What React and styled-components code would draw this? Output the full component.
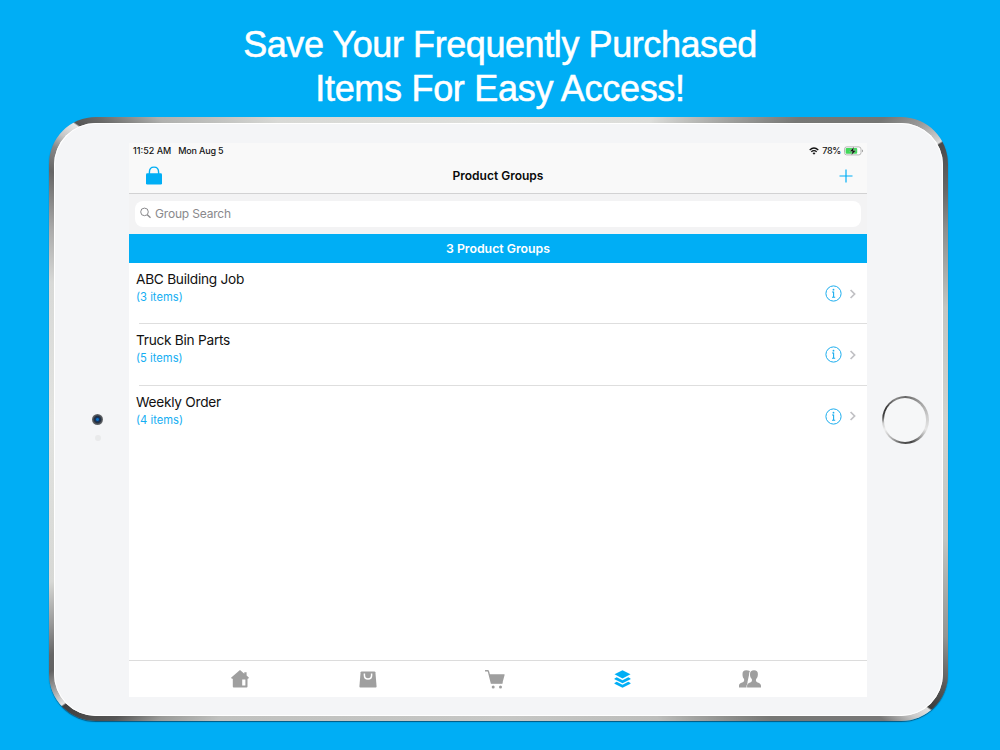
import React from 'react';
import styled, { createGlobalStyle } from 'styled-components';

const BLUE = '#00aef5';

const GlobalStyle = createGlobalStyle`
  * {
    box-sizing: border-box;
  }
  body {
    margin: 0;
    background: ${BLUE};
    font-family: Inter, "Liberation Sans", sans-serif;
  }
`;

const Page = styled.main`
  width: 1000px;
  height: 750px;
  overflow: hidden;
  background: ${BLUE};
`;

const Headline = styled.h1`
  height: 117px;
  margin: 0;
  padding-top: 23px;
  color: white;
  font: 400 36px/44px "Liberation Sans", sans-serif;
  text-align: center;
  -webkit-text-stroke: 0.55px white;
`;

const HeadlineLine = styled.span`
  display: block;
  letter-spacing: ${(props) => props.$spacing};
`;

// Metal edge of the tablet
const Tablet = styled.div`
  width: 899px;
  height: 604px;
  margin-left: 49px;
  padding: 6px 5px;
  border-radius: 47px;
  box-shadow: 0 1px 1px rgba(0, 50, 80, 0.7);
  background: conic-gradient(
    #dfe0dd 0deg, #dcddda 27deg, #999a98 39deg, #777876 45deg, #757674 52deg,
    #999 55deg, #ccc 57.5deg, #dedede 57.9deg, #4a4a4a 58.1deg, #666 62.8deg,
    #8d8e8d 67deg, #c3c5c1 76deg, #d0d2ce 90deg, #c3c5c1 105deg, #939492 116deg,
    #585858 121deg, #3c3c3c 123.8deg, #e2e2e2 124deg, #ccc 125.5deg, #777 128deg,
    #767775 137.7deg, #bcbdbb 152deg, #c6c7c5 180deg, #c0c1bf 223deg, #999a98 228.5deg,
    #555 232deg, #3f3f3f 236.6deg, #e5e5e5 236.8deg, #b0b0b0 238.2deg, #626262 240.6deg,
    #666 242.2deg, #999 245.4deg, #d7d8d5 250deg, #e2e3e0 270deg, #d8d9d7 287deg,
    #aaa 293deg, #666 299deg, #888 301.5deg, #c5c5c5 303deg, #e9e9e9 304.8deg,
    #555 305deg, #6b6b6a 307deg, #b0b1af 311.5deg, #d8d9d6 323.5deg, #dfe0dd 360deg
  );
`;

const Face = styled.div`
  display: grid;
  grid-template-columns: 75px 738px 76px;
  height: 593px;
  padding-top: 20px;
  border-radius: 42px;
  background: #f4f5f7;
  box-shadow: inset 0 0 0 1px white;
`;

const Bezel = styled.div`
  display: flex;
  flex-direction: column;
  align-items: center;
  padding-top: ${(props) => props.$top};
`;

const Camera = styled.div`
  width: 11px;
  height: 11px;
  margin-left: 12px;
  border-radius: 50%;
  background: radial-gradient(circle, #0b72c4 0 12%, #143263 25%, #25303f 42%, #4d5156 54%, #686b70 70%);
`;

const Sensor = styled.div`
  width: 6px;
  height: 6px;
  margin: 10px 0 0 13px;
  border-radius: 50%;
  background: #e9eaeb;
`;

const HomeButton = styled.div`
  width: 47px;
  height: 48px;
  padding: 2.3px;
  border-radius: 50%;
  background: conic-gradient(#666, #999 35deg, #ccc 80deg, #e5e5e5 115deg, #aaa 135deg, #444 165deg, #555 190deg, #aaa 215deg, #eee 245deg, #ccc 262deg, #444 280deg, #333 300deg, #888 335deg, #666 360deg);

  &::after {
    content: "";
    display: block;
    height: 100%;
    border-radius: 50%;
    background: #f6f7f8;
  }
`;

const Screen = styled.section`
  display: flex;
  flex-direction: column;
  height: 554px;
  background: white;
`;

const StatusBar = styled.div`
  display: flex;
  justify-content: space-between;
  height: 15px;
  padding: 0 4px;
  background: #f9f9f9;
  color: #151515;
  font-size: 9px;
  font-weight: 500;
  line-height: 15px;
`;

const StatusGroup = styled.div`
  display: flex;
  align-items: center;
  gap: ${(props) => props.$gap};
`;

const StatusText = styled.span`
  letter-spacing: ${(props) => props.$spacing || 'normal'};
`;

const NavBar = styled.header`
  display: grid;
  grid-template-columns: 50px 1fr 50px;
  align-items: center;
  height: 36px;
  border-bottom: 1px solid #d2d2d3;
  background: #f9f9f9;
`;

const NavAction = styled.button`
  display: flex;
  justify-content: center;
  padding: ${(props) => props.$padding || 0};
  border: 0;
  background: none;
`;

const NavTitle = styled.h2`
  margin: 0;
  color: #0a0a0a;
  font-size: 12px;
  font-weight: 600;
  text-align: center;
`;

const SearchBar = styled.div`
  height: 40px;
  padding: 7px 6px;
  background: #f3f3f4;
`;

const SearchField = styled.div`
  display: flex;
  align-items: center;
  gap: 3px;
  height: 26px;
  padding: 0 0 2px 5px;
  border-radius: 8px;
  background: white;
  color: #89898c;
  font-size: 12px;
  letter-spacing: -0.18px;
`;

const CountBanner = styled.div`
  height: 29px;
  background: ${BLUE};
  color: white;
  font-size: 12.3px;
  font-weight: 600;
  line-height: 29px;
  text-align: center;
`;

const GroupList = styled.ul`
  flex: 1;
  margin: 0;
  padding: 0;
  list-style: none;
`;

const GroupRow = styled.li`
  display: flex;
  justify-content: space-between;
  height: 61.3px;
  padding: 7px 10px 0 7px;
  background: ${(props) =>
    props.$last ? 'none' : 'linear-gradient(#dedede, #dedede) 10px 100% / 100% 1px no-repeat'};
`;

const GroupName = styled.div`
  color: #111;
  font-size: 13.7px;
  line-height: 18px;
  letter-spacing: -0.27px;
`;

const GroupItems = styled.div`
  color: #14aef2;
  font-size: 11.2px;
  line-height: 18px;
`;

const RowActions = styled.div`
  display: flex;
  align-items: center;
  gap: 7px;
  height: 47px;
`;

const TabBar = styled.nav`
  display: flex;
  justify-content: center;
  height: 37px;
  padding-right: 6px;
  border-top: 1px solid #dcdcdc;
`;

const Tab = styled.div`
  display: flex;
  align-items: center;
  justify-content: center;
  width: 127.5px;
  color: ${(props) => (props.$active ? BLUE : '#9f9f9f')};
`;

const groups = [
  { name: 'ABC Building Job', items: 3 },
  { name: 'Truck Bin Parts', items: 5 },
  { name: 'Weekly Order', items: 4 },
];

const WifiIcon = () => (
  <svg width="10" height="8" viewBox="0 0 10 8">
    <path d="M.7 3 Q5 -1 9.3 3M2.3 4.7 Q5 2.4 7.7 4.7" fill="none" stroke="#111" strokeWidth="1.3" />
    <path d="M3.5 6 Q5 4.8 6.5 6 L5 7.7Z" fill="#111" />
  </svg>
);

const BatteryIcon = () => (
  <svg width="19" height="10" viewBox="0 0 19 10">
    <rect x=".5" y=".9" width="16.5" height="8" rx="2.2" fill="white" stroke="#a5a5a5" strokeWidth=".8" />
    <rect x="1.6" y="2" width="11.6" height="5.8" rx="1" fill="#43d85b" />
    <path d="M18 3.5v2.8q1-.4 1-1.4t-1-1.4" fill="#999" />
    <path d="M10 .8 5.6 5.4h2.7L7.3 9.2 12.2 4.4H9.4Z" fill="#111" stroke="#fff" strokeWidth=".3" />
  </svg>
);

const LockIcon = () => (
  <svg width="18" height="20" viewBox="0 0 18 20">
    <path d="M4.4 8V6.2C4.4 3 6.3 1.1 9 1.1s4.6 1.9 4.6 5.1V8" fill="none" stroke={BLUE} strokeWidth="1.4" />
    <rect x="1" y="7.2" width="16" height="11.3" rx="1.3" fill={BLUE} />
  </svg>
);

const PlusIcon = () => (
  <svg width="14" height="14" viewBox="0 0 14 14">
    <path d="M7 .5v13M.5 7h13" stroke={BLUE} strokeWidth="1.2" />
  </svg>
);

const SearchIcon = () => (
  <svg width="12" height="12" viewBox="0 0 12 12" fill="none" stroke="#89898c">
    <circle cx="4.5" cy="4.9" r="3.8" />
    <path d="m7.3 7.7 3.2 3" strokeWidth="1.3" />
  </svg>
);

const InfoIcon = () => (
  <svg width="17" height="17" viewBox="0 0 17 17" fill="none" stroke="#1badee">
    <circle cx="8.5" cy="8.5" r="7.6" />
    <path d="M7 7h1.6v5M7 12.2h3.2" strokeWidth="1.1" />
    <circle cx="8.5" cy="4.7" r=".9" fill="#1badee" stroke="none" />
  </svg>
);

const ChevronIcon = () => (
  <svg width="8" height="10" viewBox="0 0 8 10">
    <path d="m1.6 1 4 4-4 4" fill="none" stroke="#c0c0c4" strokeWidth="1.7" />
  </svg>
);

const HouseIcon = () => (
  <svg width="18" height="18" viewBox="0 0 18 18" fill="currentColor">
    <path
      fillRule="evenodd"
      d="M9 0 13.3 3.7V2.3H15.6V5.6L18 7.7 17.1 8.7H16.5V16.6Q16.5 17.5 15.6 17.5H2.7Q1.8 17.5 1.8 16.6V8.7H.9L0 7.7ZM11.2 9.5V15.5H14.4V9.5Z"
    />
  </svg>
);

const BagIcon = () => (
  <svg width="18" height="17" viewBox="0 0 18 17">
    <path d="M2.6.5H15.4Q16.3.5 16.4 1.3L17.6 15.5Q17.6 16.5 16.7 16.5H1.3Q.4 16.5.4 15.5L1.6 1.3Q1.7.5 2.6.5Z" fill="currentColor" />
    <path d="M5.4 2.5V4.2Q5.4 8 9 8T12.6 4.2V2.5" fill="none" stroke="white" strokeWidth="1.5" />
  </svg>
);

const CartIcon = () => (
  <svg width="20" height="19" viewBox="0 0 20 19" fill="currentColor">
    <path d="M.4.8H2.6Q3.3.8 3.5 1.6L6.4 13H17" fill="none" stroke="currentColor" strokeWidth="1.4" strokeLinecap="round" />
    <path d="M4.1 4.2H19.2Q19.8 4.2 19.6 4.9L17.5 12.8Q17.4 13.3 16.8 13.3H6.4Z" />
    <circle cx="8.2" cy="16.9" r="1.5" />
    <circle cx="15.5" cy="16.9" r="1.5" />
  </svg>
);

const LayersIcon = () => (
  <svg width="17" height="18" viewBox="0 0 17 18" fill="currentColor">
    <path d="M8.5.2 16.5 4.3 8.5 8.4.5 4.3Z" />
    <path d="m.5 8.4 2.2-1.1 5.8 3 5.8-3 2.2 1.1v.8l-8 4.1-8-4.1ZM.5 12.9l2.2-1.1 5.8 3 5.8-3 2.2 1.1v.8l-8 4.1-8-4.1Z" />
  </svg>
);

const PeopleIcon = () => (
  <svg width="22" height="18" viewBox="0 0 22 18" fill="currentColor">
    <path d="M7.2.2C4.7.2 3.4 1.7 3.5 4.2c0 2 .5 3.6 1.4 4.6.5.7.4 2.3-.3 2.9C3.2 12.8.2 12.8 0 15.6v1.9h8.5V12L10.9.9C9.6.4 8.6.2 7.2.2Z" />
    <path
      d="M15 .2c-2.6 0-4.1 1.5-4 4 0 2 .6 3.5 1.6 4.6.6.7.5 2.3-.2 2.9-1.4 1.1-4.2 1.3-4.3 4v1.8H22v-1.8c-.2-2.7-3.1-2.9-4.5-4-.7-.6-.8-2.2-.2-2.9 1-1.1 1.5-2.6 1.6-4.6.1-2.5-1.3-4-3.9-4Z"
      stroke="white"
      strokeWidth="1.2"
      paintOrder="stroke"
    />
  </svg>
);

const tabs = [
  { id: 'home', Icon: HouseIcon },
  { id: 'products', Icon: BagIcon },
  { id: 'cart', Icon: CartIcon },
  { id: 'groups', Icon: LayersIcon },
  { id: 'account', Icon: PeopleIcon },
];

const App = () => {
  return (
    <Page>
      <GlobalStyle />
      <Headline>
        <HeadlineLine $spacing="-0.42px">Save Your Frequently Purchased</HeadlineLine>
        <HeadlineLine $spacing="-0.3px">Items For Easy Access!</HeadlineLine>
      </Headline>
      <Tablet>
        <Face>
          <Bezel $top="271px">
            <Camera />
            <Sensor />
          </Bezel>
          <Screen>
            <StatusBar>
              <StatusGroup $gap="7px">
                <StatusText>11:52 AM</StatusText>
                <StatusText $spacing="-0.18px">Mon Aug 5</StatusText>
              </StatusGroup>
              <StatusGroup $gap="3px">
                <WifiIcon />
                <StatusText $spacing="-0.3px">78%</StatusText>
                <BatteryIcon />
              </StatusGroup>
            </StatusBar>
            <NavBar>
              <NavAction aria-label="Lock"><LockIcon /></NavAction>
              <NavTitle>Product Groups</NavTitle>
              <NavAction aria-label="Add group" $padding="0 0 0 8px"><PlusIcon /></NavAction>
            </NavBar>
            <SearchBar>
              <SearchField>
                <SearchIcon />
                Group Search
              </SearchField>
            </SearchBar>
            <CountBanner>{groups.length} Product Groups</CountBanner>
            <GroupList>
              {groups.map((group, i) => (
                <GroupRow key={group.name} $last={i === groups.length - 1}>
                  <div>
                    <GroupName>{group.name}</GroupName>
                    <GroupItems>({group.items} items)</GroupItems>
                  </div>
                  <RowActions>
                    <InfoIcon />
                    <ChevronIcon />
                  </RowActions>
                </GroupRow>
              ))}
            </GroupList>
            <TabBar>
              {tabs.map(({ id, Icon }) => (
                <Tab key={id} $active={id === 'groups'}><Icon /></Tab>
              ))}
            </TabBar>
          </Screen>
          <Bezel $top="253px">
            <HomeButton />
          </Bezel>
        </Face>
      </Tablet>
    </Page>
  );
};

export default App;
